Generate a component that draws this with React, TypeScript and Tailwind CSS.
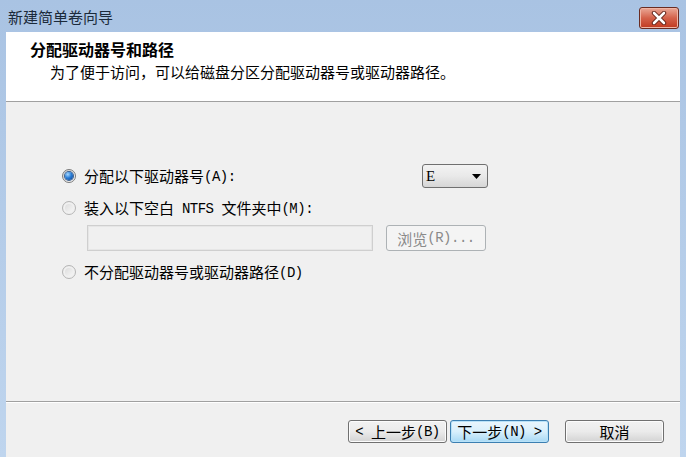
const font = "font-['Noto_Sans_CJK_SC','Noto_Sans',sans-serif]";

// half-width latin, like the SimSun ascii glyphs in the dialog
function M({ children }: { children: React.ReactNode }) {
  return (
    <span className="whitespace-pre align-[1px] font-['Liberation_Mono',monospace] text-[14px] tracking-[-0.5px]">
      {children}
    </span>
  );
}

function Radio({ checked, disabled }: { checked?: boolean; disabled?: boolean }) {
  return (
    <span
      className={`flex size-[14px] shrink-0 items-center justify-center rounded-full border ${
        disabled
          ? "border-[#b5b5b5] bg-linear-to-br from-[#d8d8d8] to-[#fbfbfb] shadow-[inset_0_0_0_2px_#f0f0f0]"
          : "border-[#7a7a7a] bg-linear-to-br from-[#d0d0d0] to-[#fafafa]"
      }`}
    >
      {checked ? (
        <span className="size-[8px] rounded-full bg-[radial-gradient(circle_at_35%_30%,#a6d8ff_0%,#2b7fd8_45%,#0a3c8a_100%)] shadow-[0_0_0_1px_#3a5f8f]" />
      ) : null}
    </span>
  );
}

function NavButton({
  children,
  primary,
}: {
  children: React.ReactNode;
  primary?: boolean;
}) {
  return (
    <button
      type="button"
      className={`flex h-[23px] w-[99px] items-center justify-center rounded-[3px] border text-[15px] leading-none text-black ${
        primary
          ? "border-[#3c7fb1] bg-linear-to-b from-[#eaf6fd] via-[#d9f0fc] to-[#a7d9f5] shadow-[inset_0_0_0_1px_#b9e2f8]"
          : "border-[#707070] bg-linear-to-b from-[#f2f2f2] via-[#ebebeb] to-[#d3d3d3] shadow-[inset_0_0_0_1px_#fcfcfc]"
      }`}
    >
      {children}
    </button>
  );
}

export default function App() {
  return (
    <div
      className={`flex h-[457px] w-[686px] flex-col overflow-hidden bg-linear-to-b from-[#a9c3e3] to-[#bfd5ee] ${font}`}
    >
      {/* title bar */}
      <div className="flex h-[32px] shrink-0 items-start justify-between pl-[8px] pr-[7px]">
        <span className="mt-[7px] text-[15px] leading-[20px] text-[#1b2a3a]">新建简单卷向导</span>
        <button
          type="button"
          aria-label="关闭"
          className="mt-[7px] flex h-[22px] w-[40px] items-center justify-center rounded-[3px] border border-[#6a2c22] bg-linear-to-b from-[#e9a897] via-[#d4614a] to-[#c0381d] shadow-[inset_0_0_0_1px_#f0b5a5]"
        >
          <svg width="16" height="14" viewBox="0 0 16 14" aria-hidden>
            <path
              d="M3 2 L13 12 M13 2 L3 12"
              stroke="#5b1c12"
              strokeWidth="4.4"
              strokeLinecap="round"
            />
            <path
              d="M3 2 L13 12 M13 2 L3 12"
              stroke="#ffffff"
              strokeWidth="2.6"
              strokeLinecap="round"
            />
          </svg>
        </button>
      </div>

      {/* client area */}
      <div className="mx-[6px] flex flex-1 flex-col bg-[#f0f0f0]">
        <div className="flex h-[70px] shrink-0 flex-col border-b border-[#a0a0a0] bg-white pl-[24px] pt-[7px]">
          <span className="text-[16px] font-bold leading-[20px] text-black">分配驱动器号和路径</span>
          <span className="mt-[3px] pl-[20px] text-[15px] leading-[20px] text-black">
            为了便于访问，可以给磁盘分区分配驱动器号或驱动器路径。
          </span>
        </div>

        <div className="flex h-[300px] shrink-0 flex-col border-b border-[#a0a0a0] pl-[56px] pt-[62px] text-[15px] text-black shadow-[0_1px_0_#ffffff]">
          <div className="flex h-[24px] items-center">
            <Radio checked />
            <span className="ml-[8px] leading-none">
              分配以下驱动器号<M>(A):</M>
            </span>
            <div className="ml-auto mr-[192px] flex h-[24px] w-[66px] items-center justify-between rounded-[3px] border border-[#707070] bg-linear-to-b from-[#f3f3f3] via-[#e9e9e9] to-[#d6d6d6] pl-[3px] pr-[6px]">
              <span className="font-['Liberation_Serif',serif] text-[15px] leading-none">E</span>
              <svg width="9" height="5" viewBox="0 0 9 5" aria-hidden>
                <path d="M0 0 H9 L4.5 5 Z" fill="#000" />
              </svg>
            </div>
          </div>
          <div className="mt-[8px] flex h-[24px] items-center">
            <Radio disabled />
            <span className="ml-[8px] leading-none">
              装入以下空白<M> NTFS </M>文件夹中<M>(M):</M>
            </span>
          </div>
          <div className="mt-[5px] flex h-[26px] items-center pl-[25px]">
            <div className="h-[26px] w-[286px] border border-[#cfcfcf] bg-[#f0f0f0] shadow-[inset_0_0_0_1px_#e6e6e6]" />
            <button
              type="button"
              disabled
              className="ml-[13px] flex h-[26px] w-[100px] items-center justify-center rounded-[3px] border border-[#adb2b5] bg-[#f4f4f4] text-[15px] leading-none text-[#8a8a8a]"
            >
              浏览<M>(R)...</M>
            </button>
          </div>
          <div className="mt-[9px] flex h-[24px] items-center">
            <Radio disabled />
            <span className="ml-[8px] leading-none">
              不分配驱动器号或驱动器路径<M>(D)</M>
            </span>
          </div>
        </div>

        <div className="flex flex-1 items-start pl-[342px] pt-[18px]">
          <NavButton>
            <M>{"< "}</M>上一步<M>(B)</M>
          </NavButton>
          <span className="ml-[3px]">
            <NavButton primary>
              下一步<M>{"(N) >"}</M>
            </NavButton>
          </span>
          <span className="ml-[16px]">
            <NavButton>取消</NavButton>
          </span>
        </div>
      </div>
    </div>
  );
}
